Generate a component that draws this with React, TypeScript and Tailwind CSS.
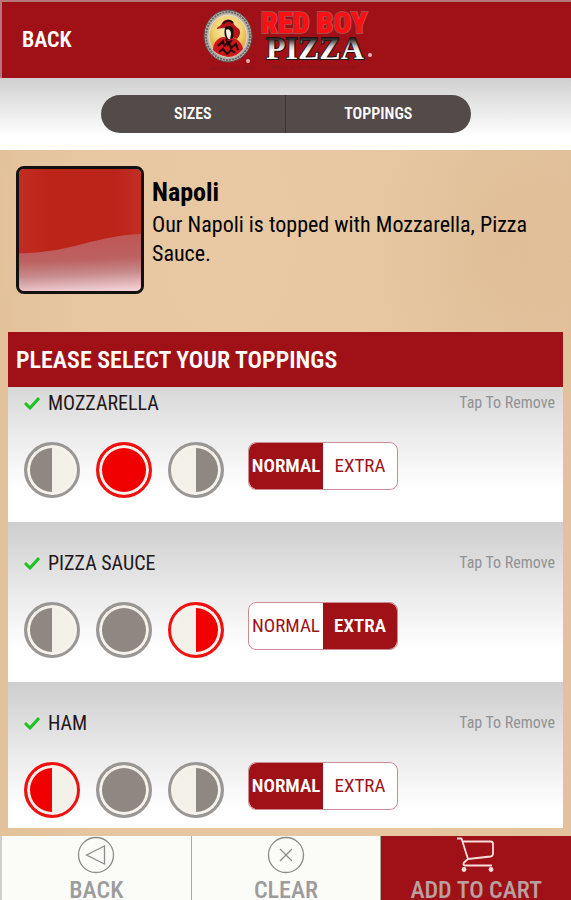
import { useId } from "react";

type Side = "left" | "whole" | "right";
type Amount = "Normal" | "Extra";

interface Topping {
  name: string;
  side: Side;
  amount: Amount;
}

const toppings: Topping[] = [
  { name: "Mozzarella", side: "whole", amount: "Normal" },
  { name: "Pizza Sauce", side: "right", amount: "Extra" },
  { name: "Ham", side: "left", amount: "Normal" },
];

const sides: { value: Side; label: string; fill: string }[] = [
  {
    value: "left",
    label: "Left half",
    fill: "bg-[linear-gradient(90deg,#8f8782_50%,#f2f0e7_50%)] checked:bg-[linear-gradient(90deg,#f00000_50%,#f2f0e7_50%)]",
  },
  { value: "whole", label: "Whole pizza", fill: "bg-[#8f8782] checked:bg-[#f00000]" },
  {
    value: "right",
    label: "Right half",
    fill: "bg-[linear-gradient(90deg,#f2f0e7_50%,#8f8782_50%)] checked:bg-[linear-gradient(90deg,#f2f0e7_50%,#f00000_50%)]",
  },
];

const amounts: Amount[] = ["Normal", "Extra"];

function Logo() {
  return (
    <svg width="172" height="64" viewBox="0 0 172 64" role="img" aria-label="Red Boy Pizza">
      <defs>
        <radialGradient id="medal" cx="50%" cy="35%" r="65%">
          <stop offset="0" stopColor="#fff3c4" />
          <stop offset="0.6" stopColor="#efcf6c" />
          <stop offset="1" stopColor="#d99a2c" />
        </radialGradient>
        <linearGradient id="steel" x1="0" y1="0" x2="0" y2="1">
          <stop offset="0.25" stopColor="#2c2727" />
          <stop offset="0.45" stopColor="#c9c5c5" />
          <stop offset="0.6" stopColor="#ffffff" />
        </linearGradient>
      </defs>
      <ellipse cx="27" cy="28" rx="24" ry="26" fill="#b9b4ae" stroke="#5d4846" strokeWidth="1" />
      <ellipse cx="27" cy="28" rx="22" ry="24" fill="none" stroke="#6d6664" strokeWidth="2" strokeDasharray="2 1" />
      <ellipse cx="27" cy="28" rx="19" ry="21" fill="url(#medal)" stroke="#e6dfd0" strokeWidth="1" />
      <path d="M12 42c0-8 5-12 10-13l11 1c5 2 8 6 9 11-4 5-9 8-15 8-6-1-11-3-15-7z" fill="#d0161c" />
      <path d="M17 38l5-5 1 5 5-4 2 6 5-4 2 6M18 44l4-3 4 5 4-4 4 3M25 31l2 6 4-5" fill="none" stroke="#240607" strokeWidth="2" />
      <path d="M16 20c2-2 4-2 5-5 3-5 9-4 11-1 1 3 2 4 6 7 2 3 1 7-2 10l-5-2-4-10-6 1-5 1z" fill="#b3151b" />
      <path d="M17 21c5 0 8-3 12-3 4 1 4 5 3 12l-5 2c-4-3-4-8-3-12z" fill="#1b1010" />
      <path d="M25 22c2-2 5 0 5 4l-1 5c-2 1-4-3-4-9z" fill="#f4ede0" />
      <path d="M22 16c3-4 7-4 10-1" fill="none" stroke="#271011" strokeWidth="2" />
      <circle cx="47" cy="53" r="2" fill="#ddb5b5" />
      <text x="8" y="62" fill="#7b1a1c" fontSize="6" fontFamily="'Liberation Serif', serif">serving since 1969</text>
      <text x="60" y="25" fill="#fb1014" stroke="#a8494a" strokeWidth="2" paintOrder="stroke" fontSize="30" fontWeight="900" fontFamily="'Roboto Condensed', sans-serif">RED BOY</text>
      <text x="65" y="51" fill="url(#steel)" stroke="#1d1415" strokeWidth="2" paintOrder="stroke" fontSize="32" fontWeight="700" fontFamily="'Liberation Serif', serif">PIZZA</text>
      <circle cx="169" cy="47" r="2" fill="#ddb5b5" />
      <text x="66" y="61" fill="#7b1a1c" fontSize="7" fontStyle="italic" fontFamily="'Liberation Serif', serif">“Home of the Sourdough Crust”</text>
    </svg>
  );
}

function ProductImage() {
  return (
    <svg
      viewBox="0 0 120 120"
      preserveAspectRatio="none"
      className="size-32 shrink-0 rounded-lg border-[3px] border-[#111]"
      role="img"
      aria-label="Napoli pizza"
    >
      <defs>
        <linearGradient id="sauce" x1="0" y1="0" x2="1" y2="0">
          <stop offset="0" stopColor="#c32c22" />
          <stop offset="0.25" stopColor="#bc2418" />
          <stop offset="0.8" stopColor="#bb2418" />
          <stop offset="1" stopColor="#c22e28" />
        </linearGradient>
        <linearGradient id="cream" x1="0.45" y1="0" x2="0.55" y2="1">
          <stop offset="0" stopColor="#bf5554" />
          <stop offset="0.45" stopColor="#bd6161" />
          <stop offset="0.7" stopColor="#c78a8b" />
          <stop offset="1" stopColor="#f0ced2" />
        </linearGradient>
      </defs>
      <rect width="120" height="120" fill="url(#sauce)" />
      <path d="M0 83C55 82 72 66 120 64V120H0z" fill="url(#cream)" />
    </svg>
  );
}

function ToppingRow({ topping }: { topping: Topping }) {
  const id = useId();
  return (
    <li className="flex h-40 shrink-0 flex-col bg-linear-to-b from-[#cecece] via-[#eeeeee] via-50% to-white to-80% pt-7 pl-4">
      <div className="flex h-[26px] items-center">
        <svg width="16" height="14" viewBox="0 0 16 14" fill="none" stroke="#18c51c" strokeWidth="3" aria-hidden="true">
          <path d="M1 7l5 5L15 2" />
        </svg>
        <h3 className="ml-2 text-xl text-[#1f171a] uppercase">{topping.name}</h3>
        <button type="button" className="mr-2 ml-auto text-base text-[#929292]">
          Tap To Remove
        </button>
      </div>
      <div className="mt-[26px] flex items-start">
        <fieldset className="flex gap-4" aria-label={topping.name + " placement"}>
          {sides.map((side) => (
            <input
              key={side.value}
              type="radio"
              name={id + "side"}
              aria-label={side.label}
              defaultChecked={side.value === topping.side}
              className={
                "size-14 appearance-none rounded-full border-[3px] border-[#999693] inset-ring-3 inset-ring-[#f5f2ec] checked:border-[#f01010] " +
                side.fill
              }
            />
          ))}
        </fieldset>
        <fieldset
          className="ml-6 flex h-12 w-[150px] overflow-hidden rounded-lg border border-[#c98d94] bg-white"
          aria-label={topping.name + " amount"}
        >
          {amounts.map((amount) => (
            <label
              key={amount}
              className="flex flex-1 basis-0 items-center justify-center text-[19px] text-[#a01117] uppercase has-checked:bg-[#a01117] has-checked:font-semibold has-checked:text-white"
            >
              <input
                type="radio"
                name={id + "amount"}
                defaultChecked={amount === topping.amount}
                className="size-0 appearance-none"
              />
              {amount}
            </label>
          ))}
        </fieldset>
      </div>
    </li>
  );
}

export default function App() {
  return (
    <div className="flex h-screen flex-col overflow-hidden bg-[#e5c6a0] font-['Roboto_Condensed','Liberation_Sans_Narrow',Roboto,sans-serif] leading-tight text-black">
      <header className="grid h-[78px] shrink-0 grid-cols-[1fr_auto_1fr] items-center border-t-2 border-l-2 border-[#b5777a] bg-[#a01117]">
        <button type="button" className="justify-self-start pl-5 text-[22px] font-semibold text-white">
          BACK
        </button>
        <Logo />
      </header>

      <nav className="flex h-[72px] shrink-0 items-center justify-center bg-linear-to-b from-[#d0d0d0] to-white to-80% px-4">
        <div className="flex h-[38px] w-[370px] divide-x divide-[#3b3333] overflow-hidden rounded-full bg-[#534a4a] text-base font-semibold text-white">
          <button type="button" className="flex-1 basis-0">SIZES</button>
          <button type="button" className="flex-1 basis-0">TOPPINGS</button>
        </div>
      </nav>

      <main className="flex min-h-0 flex-1 flex-col bg-[radial-gradient(ellipse_at_40%_12%,#eccca680,transparent_50%),radial-gradient(ellipse_at_88%_14%,#dab68e60,transparent_20%),linear-gradient(90deg,#e0bd9680,transparent_15%,transparent_75%,#dfbd9880)] px-2 pb-2">
        <section className="flex h-[182px] shrink-0 gap-2 pt-4 pl-2">
          <ProductImage />
          <div className="pt-2">
            <h1 className="text-[26px] leading-9 font-bold">Napoli</h1>
            <p className="text-[22px] leading-[29px]">Our Napoli is topped with Mozzarella, Pizza Sauce.</p>
          </div>
        </section>

        <section className="flex min-h-0 flex-1 flex-col overflow-hidden">
          <h2 className="flex h-[55px] shrink-0 items-center bg-[#a01117] px-2 text-2xl font-semibold text-white">
            PLEASE SELECT YOUR TOPPINGS
          </h2>
          <div className="flex min-h-0 flex-1 flex-col overflow-hidden">
            <ul className="-mt-[25px] flex flex-col">
              {toppings.map((topping) => (
                <ToppingRow key={topping.name} topping={topping} />
              ))}
            </ul>
          </div>
        </section>
      </main>

      <footer className="grid h-16 shrink-0 grid-cols-3 divide-x divide-[#a9a9a6] overflow-hidden border-l-2 border-[#cfcfcc] bg-[#fbfbf8] text-2xl font-medium text-[#9c9c9c]">
        <button type="button" className="flex flex-col items-center">
          <svg width="38" height="38" viewBox="0 0 38 38" fill="none" stroke="#8b8b8b" strokeWidth="1.3" className="shrink-0" aria-hidden="true">
            <circle cx="19" cy="19" r="17.5" />
            <path d="M9.5 19l18-9v18z" />
          </svg>
          BACK
        </button>
        <button type="button" className="flex flex-col items-center">
          <svg width="38" height="38" viewBox="0 0 38 38" fill="none" stroke="#8b8b8b" strokeWidth="1.3" className="shrink-0" aria-hidden="true">
            <circle cx="19" cy="19" r="17.5" />
            <path d="M13 13l12 12M25 13L13 25" />
          </svg>
          CLEAR
        </button>
        <button type="button" className="flex flex-col items-center bg-[#a01117] text-[#b9a0a2]">
          <svg width="38" height="38" viewBox="0 0 38 38" fill="none" stroke="#f6dede" strokeWidth="1.8" strokeLinejoin="round" className="shrink-0" aria-hidden="true">
            <path d="M0 2.5h4.500L11 23l22.500-2.500q2.500-.5 2.500-3V8q0-2.500-2.500-2.500H6M11 23l-4 3.500q-1.500 3 1 3H35" />
            <circle cx="7" cy="33.5" r="2.4" fill="#f6dede" stroke="none" />
            <circle cx="34" cy="33.5" r="2.4" fill="#f6dede" stroke="none" />
          </svg>
          ADD TO CART
        </button>
      </footer>
    </div>
  );
}
